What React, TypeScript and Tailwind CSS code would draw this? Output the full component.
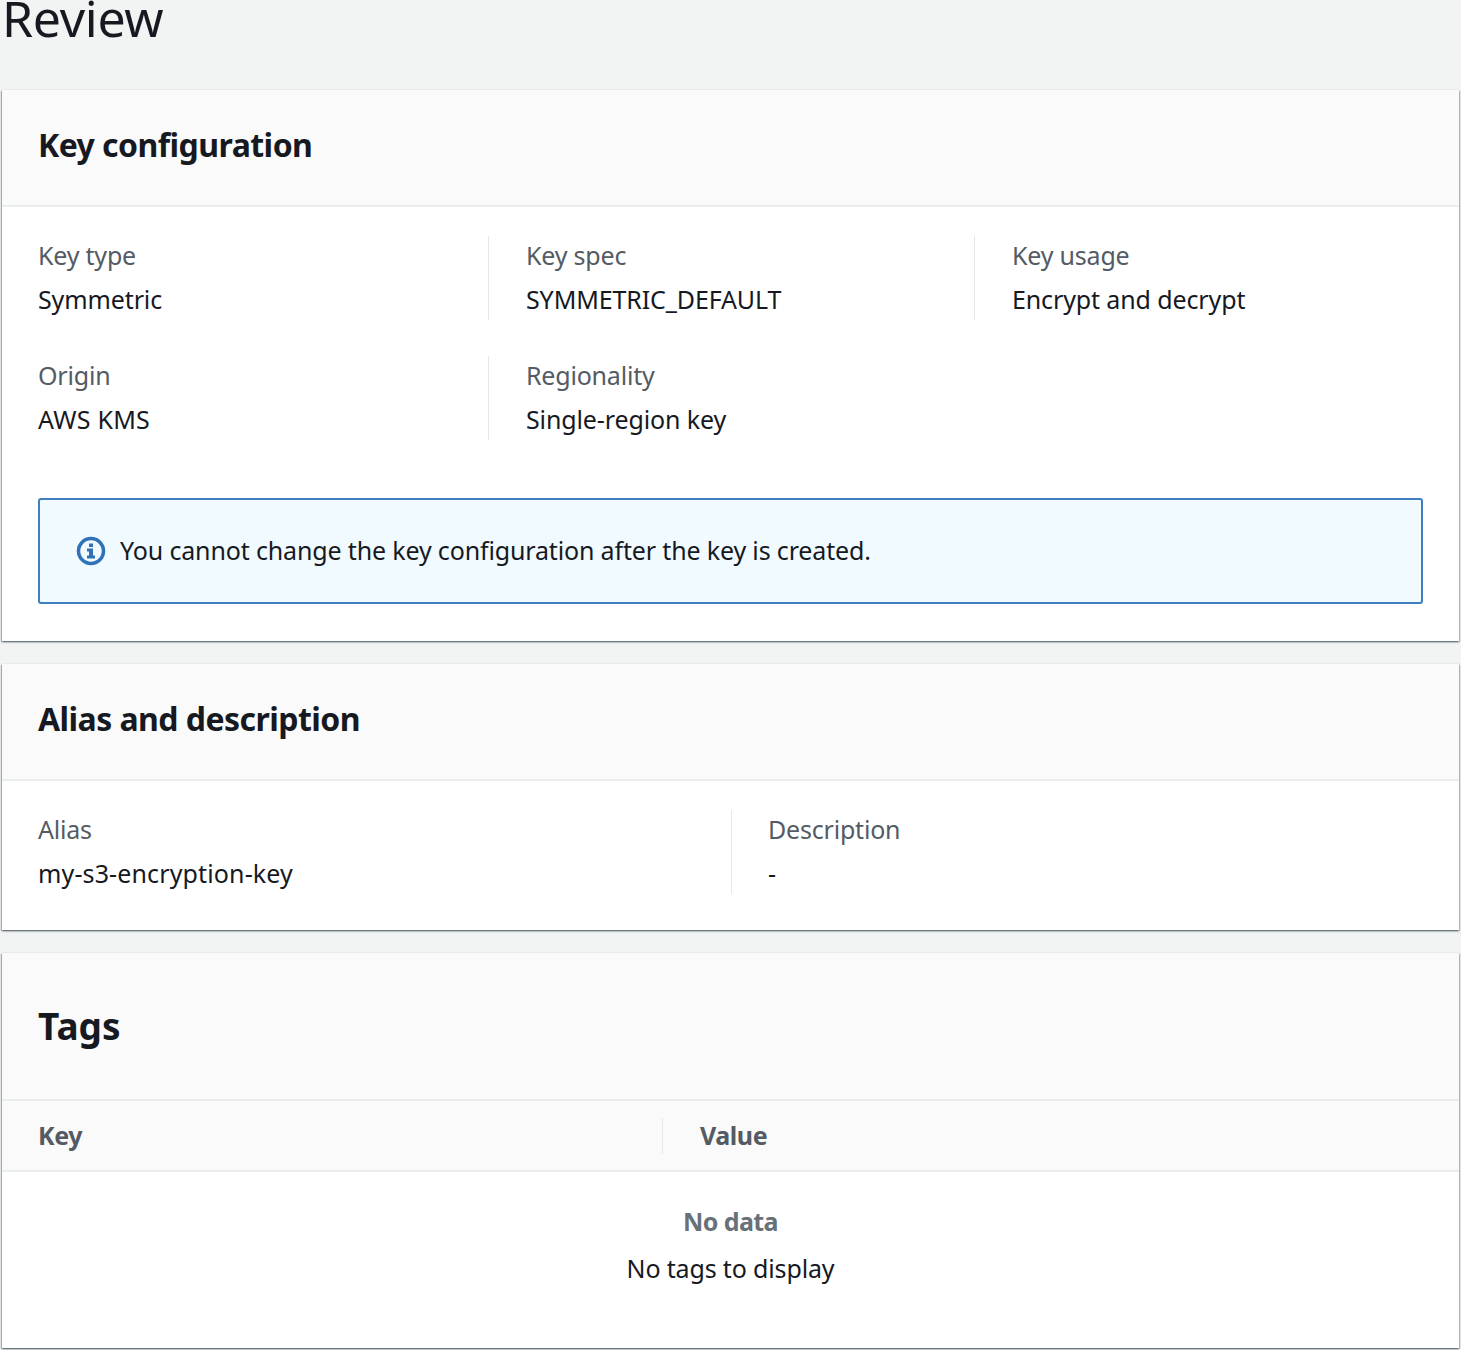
const font = "font-['Noto_Sans',sans-serif]";

function Field({ label, value, divider, valueClass = 'tracking-[-0.12px]' }: { label: string; value: string; divider?: boolean; valueClass?: string }) {
  return (
    <div className={`h-[84px] pt-[2px] ${divider ? 'border-r border-[#e6e8e8]' : ''}`}>
      <div className="text-[25px] leading-[34px] tracking-[-0.2px] text-[#545b64]">{label}</div>
      <div className={`mt-[10px] text-[25px] leading-[34px] text-[#16191f] ${valueClass}`}>{value}</div>
    </div>
  );
}

function CardHeader({ title, big }: { title: string; big?: boolean }) {
  return (
    <div className={`flex border-b-2 border-[#eaeded] bg-[#fafafa] px-[36px] ${big ? 'h-[148px] items-center' : 'h-[117px] items-center pb-[6px]'}`}>
      <h2 className={`font-bold text-[#16191f] ${big ? 'text-[37px]' : 'text-[32px] tracking-[-0.55px]'}`}>{title}</h2>
    </div>
  );
}

export default function App() {
  return (
    <main className={`${font} h-[1350px] w-full overflow-hidden bg-[#f2f3f3]`}>
      <div className="h-[90px] overflow-hidden px-[2px]">
        <h1 className="-mt-[14px] text-[50px] leading-[64px] tracking-[-0.3px] text-[#16191f]">Review</h1>
      </div>

      <div className="mx-[2px] flex flex-col gap-[23px]">
        {/* Key configuration */}
        <section className="h-[551px] bg-white shadow-[0_1px_2px_0_rgba(0,28,36,0.5),1px_1px_1px_0_rgba(0,28,36,0.15),-1px_1px_1px_0_rgba(0,28,36,0.2)]">
          <CardHeader title="Key configuration" />
          <div className="px-[36px] pt-[29px]">
            <div className="grid grid-cols-[451px_486px_1fr] gap-y-[36px]">
              <Field label="Key type" value="Symmetric" divider />
              <div className="border-r border-[#e6e8e8] pl-[37px]"><Field label="Key spec" value="SYMMETRIC_DEFAULT" /></div>
              <div className="pl-[37px]"><Field label="Key usage" value="Encrypt and decrypt" /></div>
              <Field label="Origin" value="AWS KMS" divider valueClass="tracking-[0.25px]" />
              <div className="pl-[37px]"><Field label="Regionality" value="Single-region key" /></div>
            </div>
            <div className="mt-[58px] flex h-[106px] items-center rounded-[3px] border-2 border-[#3f7fc1] bg-[#f1faff] pl-[36px]">
              <svg width="30" height="30" viewBox="0 0 30 30" className="shrink-0">
                <circle cx="15" cy="15" r="12.500" fill="none" stroke="#2f72b8" strokeWidth="3.500" />
                <rect x="13" y="7.500" width="4" height="3.500" fill="#2f72b8" />
                <path d="M11 12.500h6v7h2v3h-8v-3h2v-4h-2z" fill="#2f72b8" />
              </svg>
              <p className="ml-[14px] text-[25px] tracking-[-0.15px] text-[#16191f]">You cannot change the key configuration after the key is created.</p>
            </div>
          </div>
        </section>

        {/* Alias and description */}
        <section className="h-[266px] bg-white shadow-[0_1px_2px_0_rgba(0,28,36,0.5),1px_1px_1px_0_rgba(0,28,36,0.15),-1px_1px_1px_0_rgba(0,28,36,0.2)]">
          <CardHeader title="Alias and description" />
          <div className="grid grid-cols-[694px_1fr] px-[36px] pt-[29px]">
            <Field label="Alias" value="my-s3-encryption-key" divider valueClass="tracking-[0.13px]" />
            <div className="pl-[36px]"><Field label="Description" value="-" /></div>
          </div>
        </section>

        {/* Tags */}
        <section className="h-[395px] bg-white shadow-[0_1px_2px_0_rgba(0,28,36,0.5),1px_1px_1px_0_rgba(0,28,36,0.15),-1px_1px_1px_0_rgba(0,28,36,0.2)]">
          <CardHeader title="Tags" big />
          <div className="flex h-[71px] items-center border-b-2 border-[#eaeded] bg-[#fafafa] text-[25px] font-bold tracking-[-0.45px] text-[#545b64]">
            <div className="flex h-[36px] w-[661px] items-center border-r border-[#e6e8e8] pl-[36px]">Key</div>
            <div className="pl-[37px]">Value</div>
          </div>
          <div className="flex flex-col items-center pt-[32px] text-[25px]">
            <div className="font-bold leading-[34px] tracking-[-0.6px] text-[#687078]">No data</div>
            <div className="mt-[13px] leading-[34px] tracking-[-0.15px] text-[#16191f]">No tags to display</div>
          </div>
        </section>
      </div>
    </main>
  );
}
